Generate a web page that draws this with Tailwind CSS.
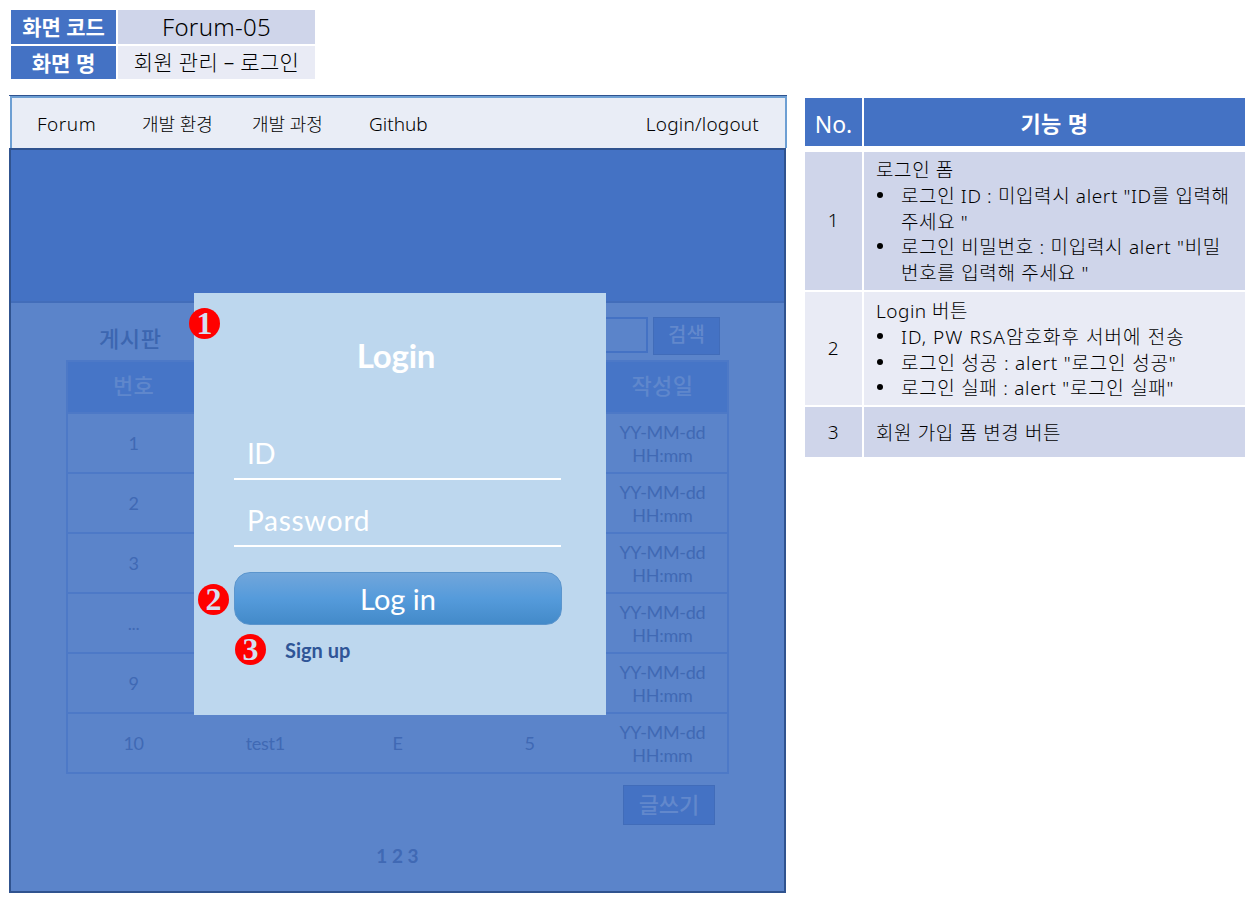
<!DOCTYPE html>
<html lang="ko">
<head>
<meta charset="utf-8">
<title>Forum-05</title>
<script src="https://cdn.jsdelivr.net/npm/@tailwindcss/browser@4"></script>
</head>
<body class="bg-white w-[1255px] h-[907px] overflow-hidden font-['Noto_Sans','Noto_Sans_CJK_KR',sans-serif] font-light text-black">
<div class="flex flex-col pt-[10px]">
  <header class="ml-[11px] grid grid-cols-[105px_197px] grid-rows-[34px_33px] gap-x-[2px] gap-y-[2px] text-center whitespace-nowrap">
    <div class="bg-[#4472c4] text-white font-bold text-[21px] leading-[35px]"><span>화면 코드</span></div>
    <div class="bg-[#cfd5ea] text-[24px] leading-[34px]"><span class="tracking-[0.3px]">Forum-05</span></div>
    <div class="bg-[#4472c4] text-white font-bold text-[21px] leading-[34px]"><span>화면 명</span></div>
    <div class="bg-[#e9ebf5] text-[21px] leading-[33px]"><span class="tracking-[0.3px]">회원 관리 – 로그인</span></div>
  </header>

  <div class="flex items-start pt-[16px]">
    <main class="relative ml-[9px] w-[778px] h-[798px] flex flex-col">
      <nav class="h-[53px] border-t border-[#2f528f] shrink-0">
        <div class="h-[52px] ml-px border-2 border-b-0 border-[#6d9fd3] bg-[#e9edf6] flex text-[19px] leading-[53px] whitespace-nowrap">
          <span class="ml-[25px] w-[105px] tracking-[0.5px]">Forum</span>
          <span class="w-[110px] text-[18px]">개발 환경</span>
          <span class="w-[117px] text-[18px]">개발 과정</span>
          <span>Github</span>
          <span class="ml-auto mr-[26px] tracking-[0.2px]">Login/logout</span>
        </div>
      </nav>
      <div class="w-[777px] flex-1 border-2 border-[#30538f] bg-[#5b84ca] flex flex-col text-[#4069b4] font-['Lato','Noto_Sans_CJK_KR',sans-serif] font-normal">
        <div class="h-[153px] bg-[#4472c4] border-b-2 border-[#426dba] shrink-0"></div>
        <section class="ml-[55px] w-[663px] pt-[14px] flex flex-col">
          <div class="h-[38px] flex justify-end text-[20px] font-bold">
            <span class="ml-[33px] mr-auto leading-[44px] text-[22px] tracking-[0.6px] text-[#3c66b0] font-medium">게시판</span>
            <span class="w-[200px] h-[36px] mr-[5px] border-2 border-[#4472c4]"></span>
            <span class="w-[67px] h-[38px] mr-[9px] border border-[#416cb9] bg-[#4472c4] text-[#6288cc] text-center leading-[33px] font-medium">검색</span>
          </div>
          <table class="mt-[5px] w-[663px] table-fixed border-collapse border-2 border-[#4d79c7] text-center text-[18px] leading-[23.5px] tracking-[-0.3px]">
            <thead>
              <tr class="h-[52px] bg-[#4675c7] text-[#5f87cc] text-[22px] tracking-[0.4px]"><th class="font-medium pb-[2px]">번호</th><th></th><th></th><th></th><th class="font-medium pb-[2px] pl-[2px]">작성일</th></tr>
            </thead>
            <tbody>
              <tr class="h-[60px] border-t-2 border-[#4d79c7]"><td class="pt-[2px]">1</td><td></td><td></td><td></td><td class="pt-[2px] pl-[2px]">YY-MM-dd<br>HH:mm</td></tr>
              <tr class="h-[60px] border-t-2 border-[#4d79c7]"><td class="pt-[2px]">2</td><td></td><td></td><td></td><td class="pt-[2px] pl-[2px]">YY-MM-dd<br>HH:mm</td></tr>
              <tr class="h-[60px] border-t-2 border-[#4d79c7]"><td class="pt-[2px]">3</td><td></td><td></td><td></td><td class="pt-[2px] pl-[2px]">YY-MM-dd<br>HH:mm</td></tr>
              <tr class="h-[60px] border-t-2 border-[#4d79c7]"><td class="pt-[2px]">...</td><td></td><td></td><td></td><td class="pt-[2px] pl-[2px]">YY-MM-dd<br>HH:mm</td></tr>
              <tr class="h-[60px] border-t-2 border-[#4d79c7]"><td class="pt-[2px]">9</td><td></td><td></td><td></td><td class="pt-[2px] pl-[2px]">YY-MM-dd<br>HH:mm</td></tr>
              <tr class="h-[60px] border-t-2 border-[#4d79c7]"><td class="pt-[2px]">10</td><td class="pt-[2px]">test1</td><td class="pt-[2px]">E</td><td class="pt-[2px]">5</td><td class="pt-[2px] pl-[2px]">YY-MM-dd<br>HH:mm</td></tr>
            </tbody>
          </table>
          <span class="self-end mt-[11px] mr-[14px] w-[92px] h-[40px] border border-[#416cb9] bg-[#4472c4] text-[#6288cc] text-center text-[22px] leading-[37px] font-medium">글쓰기</span>
          <span class="text-center mt-[18px] text-[19px] leading-[26px] font-bold">1 2 3</span>
        </section>
      </div>

      <!-- login dialog over the dimmed board -->
      <section class="absolute left-[185px] top-[198px] w-[412px] h-[422px] bg-[#bdd7ee] px-[40px] flex flex-col text-white font-['Lato','Noto_Sans_CJK_KR',sans-serif] font-normal">
        <h1 class="mt-[42px] text-center text-[33px] leading-[40px] font-bold pr-[8px]"><span class="tracking-[-0.2px]">Login</span></h1>
        <div class="mt-[54px] w-[327px] h-[51px] border-b-2 border-white pl-[13px] text-[28px] leading-[49px] tracking-[-0.5px]">ID</div>
        <div class="w-[327px] h-[67px] border-b-2 border-white pl-[13px] text-[28px] leading-[81px] tracking-[0.7px]">Password</div>
        <div class="mt-[25px] w-[328px] h-[53px] rounded-[16px] border border-[#5b95cd] bg-linear-to-b from-[#71a6db] via-[#559bdb] to-[#438ac9] text-center text-[29px] leading-[52px]">Log in</div>
        <div class="ml-[51px] mt-[11px] text-[20px] leading-[28px] font-bold text-[#2f5597]">Sign up</div>
        <span class="absolute left-[-5px] top-[15px] size-[31px] rounded-full bg-[#ff0000] text-[#d5dff0] text-center text-[32px] leading-[31px] font-bold font-['Liberation_Serif',serif]">1</span>
        <span class="absolute left-[4px] top-[291px] size-[31px] rounded-full bg-[#ff0000] text-[#d5dff0] text-center text-[32px] leading-[31px] font-bold font-['Liberation_Serif',serif]">2</span>
        <span class="absolute left-[41px] top-[341px] size-[31px] rounded-full bg-[#ff0000] text-[#d5dff0] text-center text-[32px] leading-[31px] font-bold font-['Liberation_Serif',serif]">3</span>
      </section>
    </main>

    <aside class="ml-[18px] mt-[3px] w-[440px] grid grid-cols-[57px_381px] grid-rows-[48px_138px_114px_50px] gap-x-[2px] text-[19px] leading-[25.8px] tracking-[0.62px] whitespace-nowrap">
      <div class="bg-[#4472c4] text-white text-center text-[23px] leading-[53px] tracking-normal font-normal">No.</div>
      <div class="bg-[#4472c4] text-white text-center text-[22px] leading-[51px] tracking-[0.4px] font-bold">기능 명</div>
      <div class="mt-[6px] h-[138px] bg-[#cfd5ea] flex items-center justify-center">1</div>
      <div class="mt-[6px] h-[138px] bg-[#cfd5ea] pl-[12px] pt-[6px]">
        <p>로그인 폼</p>
        <ul>
          <li class="flex gap-[18px]"><i class="mt-[8px] ml-px size-[6px] rounded-full bg-black"></i><span>로그인 ID : 미입력시 alert "ID를 입력해<br>주세요 "</span></li>
          <li class="flex gap-[18px]"><i class="mt-[8px] ml-px size-[6px] rounded-full bg-black"></i><span class="tracking-[0.7px]">로그인 비밀번호 : 미입력시 alert "비밀<br>번호를 입력해 주세요 "</span></li>
        </ul>
      </div>
      <div class="mt-[8px] h-[113px] bg-[#e9ebf5] flex items-center justify-center">2</div>
      <div class="mt-[8px] h-[113px] bg-[#e9ebf5] pl-[12px] pt-[7px]">
        <p class="tracking-[0.5px]">Login 버튼</p>
        <ul>
          <li class="flex gap-[18px]"><i class="mt-[8px] ml-px size-[6px] rounded-full bg-black"></i><span class="tracking-[1.05px]">ID, PW RSA암호화후 서버에 전송</span></li>
          <li class="flex gap-[18px]"><i class="mt-[8px] ml-px size-[6px] rounded-full bg-black"></i><span class="tracking-[0.8px]">로그인 성공 : alert "로그인 성공"</span></li>
          <li class="flex gap-[18px]"><i class="mt-[8px] ml-px size-[6px] rounded-full bg-black"></i><span class="tracking-[0.7px]">로그인 실패 : alert "로그인 실패"</span></li>
        </ul>
      </div>
      <div class="mt-[9px] h-[50px] bg-[#cfd5ea] flex items-center justify-center pt-[2px]">3</div>
      <div class="mt-[9px] h-[50px] bg-[#cfd5ea] flex items-center pl-[12px] pt-[3px]">회원 가입 폼 변경 버튼</div>
    </aside>
  </div>
</div>
</body>
</html>
